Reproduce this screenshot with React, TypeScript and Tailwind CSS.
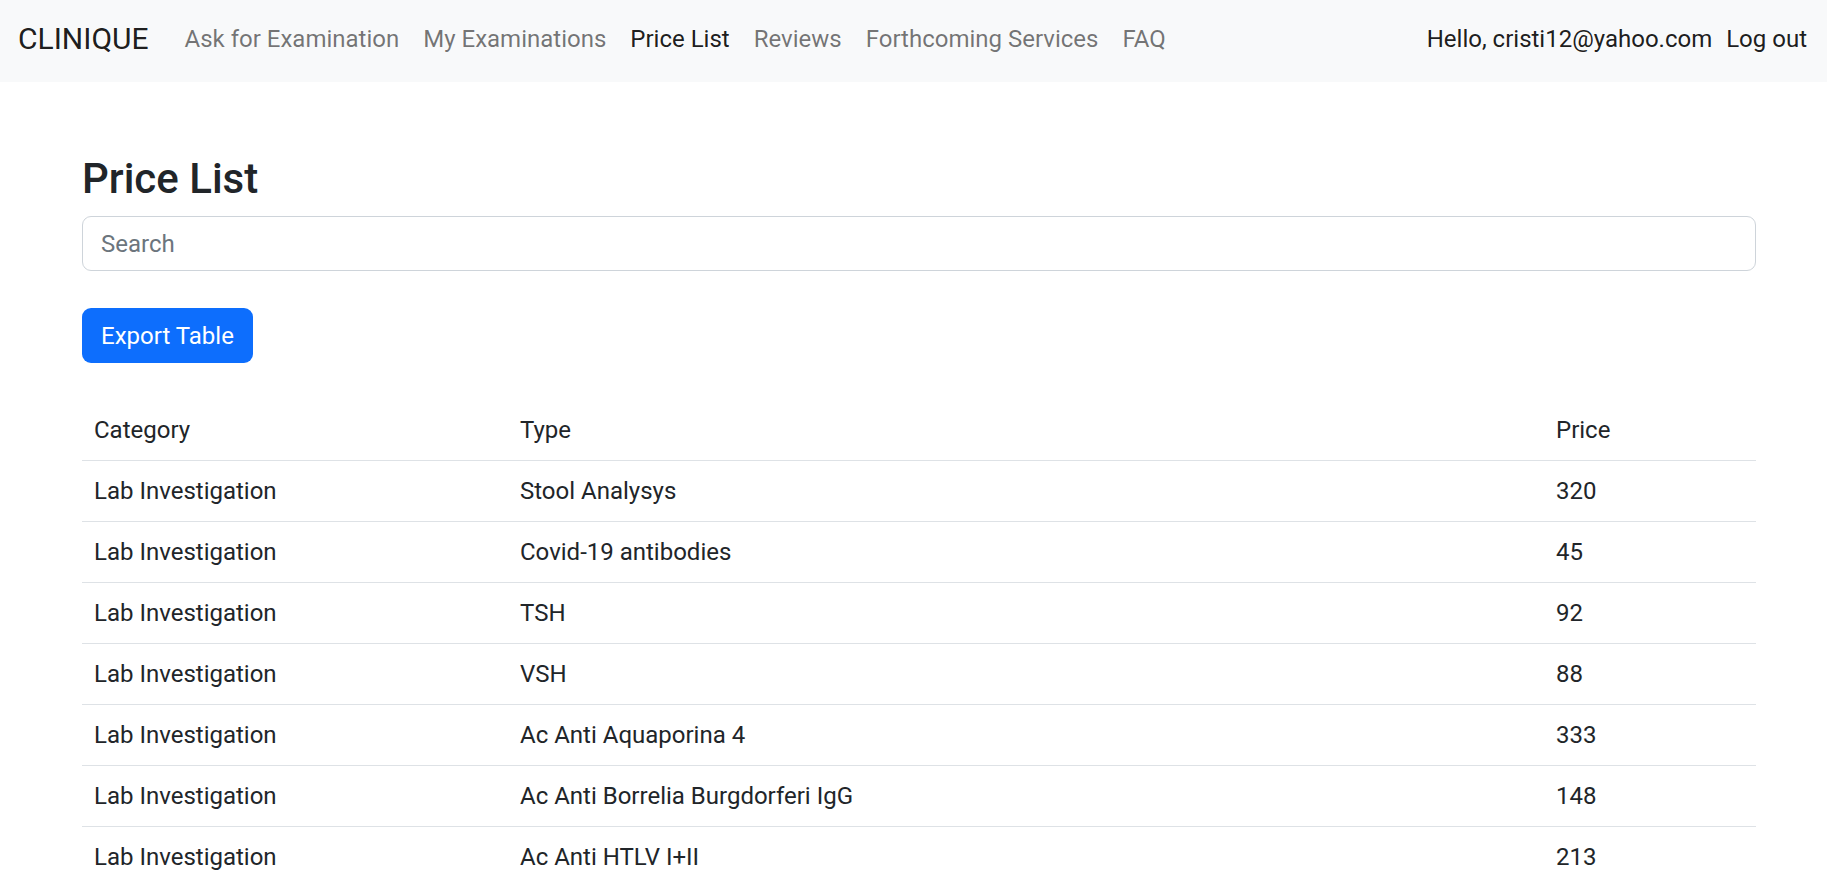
import React from 'react';

const links = [
  { label: 'Ask for Examination', active: false },
  { label: 'My Examinations', active: false },
  { label: 'Price List', active: true },
  { label: 'Reviews', active: false },
  { label: 'Forthcoming Services', active: false },
  { label: 'FAQ', active: false },
];

const rows = [
  { category: 'Lab Investigation', type: 'Stool Analysys', price: 320 },
  { category: 'Lab Investigation', type: 'Covid-19 antibodies', price: 45 },
  { category: 'Lab Investigation', type: 'TSH', price: 92 },
  { category: 'Lab Investigation', type: 'VSH', price: 88 },
  { category: 'Lab Investigation', type: 'Ac Anti Aquaporina 4', price: 333 },
  { category: 'Lab Investigation', type: 'Ac Anti Borrelia Burgdorferi IgG', price: 148 },
  { category: 'Lab Investigation', type: 'Ac Anti HTLV I+II', price: 213 },
];

export default function App() {
  return (
    <div
      className="h-screen overflow-hidden bg-white text-[#212529]"
      style={{ fontFamily: 'Roboto, "Liberation Sans", sans-serif' }}
    >
      <nav className="flex h-[82px] items-center justify-between bg-[#f8f9fa] pb-[5px] pl-[18px] pr-[20px]">
        <div className="flex items-center">
          <a href="#" className="mr-[24px] text-[30px] leading-[45px] text-black/90">
            CLINIQUE
          </a>
          <ul className="flex items-center">
            {links.map((l) => (
              <li key={l.label}>
                <a
                  href="#"
                  className={
                    l.active
                      ? 'block px-3 text-[24px] leading-[36px] text-black/90'
                      : 'block px-3 text-[24px] leading-[36px] text-black/55'
                  }
                >
                  {l.label}
                </a>
              </li>
            ))}
          </ul>
        </div>
        <div className="flex items-center gap-[14px] text-[24px] leading-[36px] text-black/90">
          <span>Hello, cristi12@yahoo.com</span>
          <a href="#">Log out</a>
        </div>
      </nav>

      <main className="ml-[82px] w-[1674px] pt-[72px]">
        <h3 className="mb-[12px] text-[42px] font-medium leading-[50px]">Price List</h3>
        <input
          type="text"
          placeholder="Search"
          className="block h-[55px] w-full rounded-[9px] border border-[#ced4da] px-[18px] text-[24px] text-[#212529] placeholder:text-[#6c757d] focus:outline-none"
        />
        <button
          type="button"
          className="mt-[37px] h-[55px] rounded-[9px] bg-[#0d6efd] px-[19px] text-[24px] text-white"
        >
          Export Table
        </button>

        <table className="mt-[37px] w-full border-collapse text-left text-[24px] leading-[36px]">
          <thead>
            <tr className="border-b border-[#dee2e6]">
              <th className="w-[426px] px-3 py-3 font-normal">Category</th>
              <th className="w-[1036px] px-3 py-3 font-normal">Type</th>
              <th className="px-3 py-3 font-normal">Price</th>
            </tr>
          </thead>
          <tbody>
            {rows.map((r) => (
              <tr key={r.type} className="border-b border-[#dee2e6]">
                <td className="px-3 py-3">{r.category}</td>
                <td className="px-3 py-3">{r.type}</td>
                <td className="px-3 py-3">{r.price}</td>
              </tr>
            ))}
          </tbody>
        </table>
      </main>
    </div>
  );
}
